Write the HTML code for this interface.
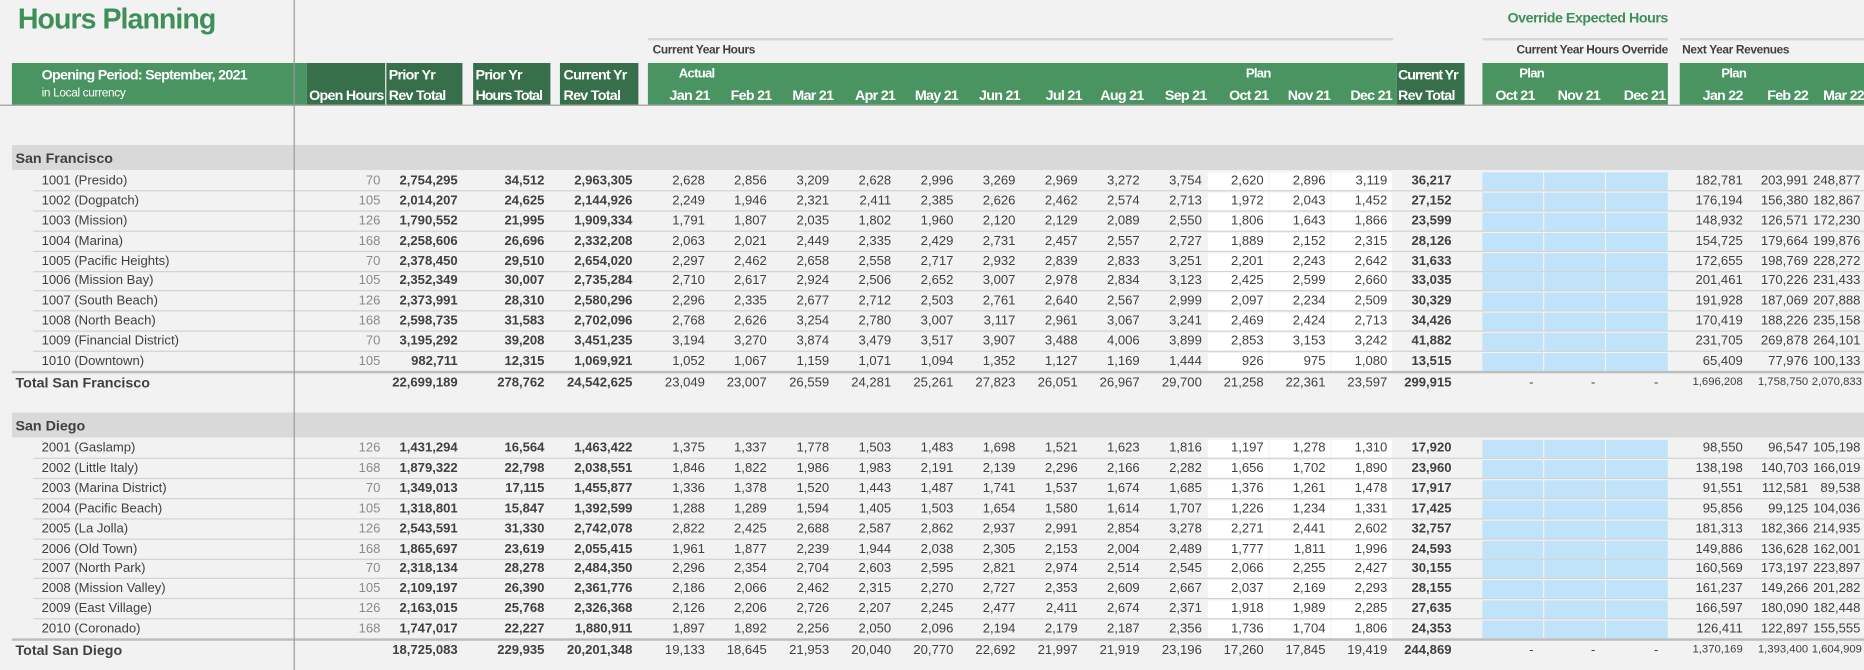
<!DOCTYPE html>
<html><head><meta charset="utf-8">
<style>
html,body{margin:0;padding:0;background:#f2f2f2;overflow:hidden;width:1864px;height:670px}
#w{position:absolute;left:0;top:0;width:1568px;height:564px;transform:scale(1.18878);transform-origin:0 0;font-family:"Liberation Sans",sans-serif;color:#404040}
.a{position:absolute}
.vl{position:absolute;left:247px;top:0;width:1px;height:564px;background:#9a9a9a;z-index:5}
.title{left:15px;top:3px;font-size:24px;font-weight:bold;color:#3f8f5a;letter-spacing:-0.8px}
.g{background:#4a9461}.d{background:#376f4a}
.h{position:absolute;color:#fff;font-weight:bold;font-size:12px;white-space:nowrap;letter-spacing:-0.6px}
.band{position:absolute;left:10px;width:1558px;height:21px;background:#d9d9d9;font-weight:bold;font-size:12px;line-height:22px;padding-left:3px;box-sizing:border-box;color:#404040}
.r{position:absolute;left:0;width:1568px;height:17px;font-size:11px;line-height:16px}
.r::after{content:"";position:absolute;left:28px;right:0;bottom:0;height:1px;background:#d2d2d2}
.r.t::after{display:none}
.r.t{border-top:2px solid #bdbdbd;left:10px;width:1558px}
.r>span{position:absolute;top:0;height:16px;text-align:right;white-space:nowrap;box-sizing:border-box;padding-right:4px}
.r>span:nth-child(1){left:35px;width:200px;text-align:left;padding:0}
.r.t>span:nth-child(1){left:3px;font-weight:bold;font-size:12px}
.r>span:nth-child(2){left:258px;width:66px;color:#8a8a8a}
.r>span:nth-child(3){left:325px;width:64px;font-weight:bold}
.r>span:nth-child(4){left:398px;width:64px;font-weight:bold}
.r>span:nth-child(5){left:471px;width:65px;font-weight:bold}
.r>span:nth-child(6){left:545px;width:52px}
.r>span:nth-child(7){left:597px;width:52px}
.r>span:nth-child(8){left:649.5px;width:52px}
.r>span:nth-child(9){left:701.7px;width:52px}
.r>span:nth-child(10){left:754px;width:52px}
.r>span:nth-child(11){left:806.2px;width:52px}
.r>span:nth-child(12){left:858.5px;width:52px}
.r>span:nth-child(13){left:910.7px;width:52px}
.r>span:nth-child(14){left:963px;width:52px}
.r>span:nth-child(15){left:1016px;width:51px;background:#fff;top:1px;height:15px;line-height:15px}
.r>span:nth-child(16){left:1068px;width:51px;background:#fff;top:1px;height:15px;line-height:15px}
.r>span:nth-child(17){left:1120px;width:51px;background:#fff;top:1px;height:15px;line-height:15px}
.r.t>span:nth-child(15),.r.t>span:nth-child(16),.r.t>span:nth-child(17){background:none}
.r>span:nth-child(18){left:1175px;width:50px;font-weight:bold}
.r>span:nth-child(19){left:1247px;width:51px;background:#c0e3fa;top:1px;height:15px}
.r>span:nth-child(20){left:1299px;width:51px;background:#c0e3fa;top:1px;height:15px}
.r>span:nth-child(21){left:1351px;width:52px;background:#c0e3fa;top:1px;height:15px}
.r.t>span:nth-child(19),.r.t>span:nth-child(20),.r.t>span:nth-child(21){background:none;padding-right:8px}
.r>span:nth-child(22){left:1413px;width:56px;padding-right:3px}
.r>span:nth-child(23){left:1469px;width:55px;padding-right:3px}
.r>span:nth-child(24){left:1524px;width:44px;padding-right:3px}
.r.t>span:nth-child(n+22){font-size:9.5px}
.r.t>span{top:0 !important;line-height:16px !important;height:16px !important}
.r.t>span:nth-child(n+2){margin-left:-10px}
</style></head><body><div id="w">
<div class="vl"></div>
<div class="a title">Hours Planning</div>

<div class="a" style="left:1247px;top:8px;width:156px;text-align:right;font-size:12px;font-weight:bold;color:#3f8f5a;letter-spacing:-0.4px">Override Expected Hours</div>
<div class="a" style="left:545px;top:32px;width:627px;height:2px;background:#d6d6d6"></div>
<div class="a" style="left:1247px;top:32px;width:156px;height:2px;background:#d6d6d6"></div>
<div class="a" style="left:1413px;top:32px;width:155px;height:2px;background:#d6d6d6"></div>
<div class="a" style="left:549px;top:37px;font-size:10px;font-weight:bold;color:#404040;letter-spacing:-0.3px">Current Year Hours</div>
<div class="a" style="left:1247px;top:37px;width:156px;text-align:right;font-size:10px;font-weight:bold;color:#404040;letter-spacing:-0.3px">Current Year Hours Override</div>
<div class="a" style="left:1415px;top:37px;font-size:10px;font-weight:bold;color:#404040;letter-spacing:-0.3px">Next Year Revenues</div>

<div class="a g" style="left:10px;top:53px;width:248px;height:35px"></div>
<div class="h" style="left:35px;top:56px">Opening Period: September, 2021</div>
<div class="h" style="left:35px;top:73px;font-size:10px;font-weight:normal;letter-spacing:-0.3px">in Local currency</div>
<div class="a d" style="left:258px;top:53px;width:66px;height:35px"></div>
<div class="h" style="left:260px;top:73px">Open Hours</div>
<div class="a d" style="left:325px;top:53px;width:64px;height:35px"></div>
<div class="h" style="left:327px;top:56px">Prior Yr</div><div class="h" style="left:327px;top:73px">Rev Total</div>
<div class="a d" style="left:398px;top:53px;width:65px;height:35px"></div>
<div class="h" style="left:400px;top:56px">Prior Yr</div><div class="h" style="left:400px;top:73px;letter-spacing:-0.9px">Hours Total</div>
<div class="a d" style="left:471px;top:53px;width:66px;height:35px"></div>
<div class="h" style="left:474px;top:56px">Current Yr</div><div class="h" style="left:474px;top:73px">Rev Total</div>
<div class="a g" style="left:545px;top:53px;width:630px;height:35px"></div>
<div class="h" style="left:571px;top:56px;font-size:11px">Actual</div>
<div class="h" style="left:1048px;top:56px;font-size:11px">Plan</div>
<div class="h" style="left:545px;top:73px;width:52px;text-align:right">Jan 21</div>
<div class="h" style="left:597px;top:73px;width:52px;text-align:right">Feb 21</div>
<div class="h" style="left:649px;top:73px;width:52px;text-align:right">Mar 21</div>
<div class="h" style="left:701px;top:73px;width:52px;text-align:right">Apr 21</div>
<div class="h" style="left:754px;top:73px;width:52px;text-align:right">May 21</div>
<div class="h" style="left:806px;top:73px;width:52px;text-align:right">Jun 21</div>
<div class="h" style="left:858px;top:73px;width:52px;text-align:right">Jul 21</div>
<div class="h" style="left:910px;top:73px;width:52px;text-align:right">Aug 21</div>
<div class="h" style="left:963px;top:73px;width:52px;text-align:right">Sep 21</div>
<div class="h" style="left:1015px;top:73px;width:52px;text-align:right">Oct 21</div>
<div class="h" style="left:1067px;top:73px;width:52px;text-align:right">Nov 21</div>
<div class="h" style="left:1119px;top:73px;width:52px;text-align:right">Dec 21</div>
<div class="a d" style="left:1175px;top:53px;width:57px;height:35px"></div>
<div class="h" style="left:1176px;top:56px;letter-spacing:-0.9px">Current Yr</div><div class="h" style="left:1176px;top:73px">Rev Total</div>
<div class="a g" style="left:1247px;top:53px;width:156px;height:35px"></div>
<div class="h" style="left:1278px;top:56px;font-size:11px">Plan</div>
<div class="h" style="left:1247px;top:73px;width:44px;text-align:right">Oct 21</div>
<div class="h" style="left:1299px;top:73px;width:47px;text-align:right">Nov 21</div>
<div class="h" style="left:1351px;top:73px;width:50px;text-align:right">Dec 21</div>
<div class="a g" style="left:1413px;top:53px;width:155px;height:35px"></div>
<div class="h" style="left:1448px;top:56px;font-size:11px">Plan</div>
<div class="h" style="left:1413px;top:73px;width:53px;text-align:right">Jan 22</div>
<div class="h" style="left:1466px;top:73px;width:55px;text-align:right">Feb 22</div>
<div class="h" style="left:1521px;top:73px;width:47px;text-align:right">Mar 22</div>
<div class="a" style="left:0;top:88px;width:1568px;height:1px;background:#9a9a9a"></div>

<div class="band" style="top:122px">San Francisco</div>
<div class="r" style="top:144px"><span>1001 (Presido)</span><span>70</span><span>2,754,295</span><span>34,512</span><span>2,963,305</span><span>2,628</span><span>2,856</span><span>3,209</span><span>2,628</span><span>2,996</span><span>3,269</span><span>2,969</span><span>3,272</span><span>3,754</span><span>2,620</span><span>2,896</span><span>3,119</span><span>36,217</span><span></span><span></span><span></span><span>182,781</span><span>203,991</span><span>248,877</span></div>
<div class="r" style="top:161px"><span>1002 (Dogpatch)</span><span>105</span><span>2,014,207</span><span>24,625</span><span>2,144,926</span><span>2,249</span><span>1,946</span><span>2,321</span><span>2,411</span><span>2,385</span><span>2,626</span><span>2,462</span><span>2,574</span><span>2,713</span><span>1,972</span><span>2,043</span><span>1,452</span><span>27,152</span><span></span><span></span><span></span><span>176,194</span><span>156,380</span><span>182,867</span></div>
<div class="r" style="top:178px"><span>1003 (Mission)</span><span>126</span><span>1,790,552</span><span>21,995</span><span>1,909,334</span><span>1,791</span><span>1,807</span><span>2,035</span><span>1,802</span><span>1,960</span><span>2,120</span><span>2,129</span><span>2,089</span><span>2,550</span><span>1,806</span><span>1,643</span><span>1,866</span><span>23,599</span><span></span><span></span><span></span><span>148,932</span><span>126,571</span><span>172,230</span></div>
<div class="r" style="top:195px"><span>1004 (Marina)</span><span>168</span><span>2,258,606</span><span>26,696</span><span>2,332,208</span><span>2,063</span><span>2,021</span><span>2,449</span><span>2,335</span><span>2,429</span><span>2,731</span><span>2,457</span><span>2,557</span><span>2,727</span><span>1,889</span><span>2,152</span><span>2,315</span><span>28,126</span><span></span><span></span><span></span><span>154,725</span><span>179,664</span><span>199,876</span></div>
<div class="r" style="top:212px"><span>1005 (Pacific Heights)</span><span>70</span><span>2,378,450</span><span>29,510</span><span>2,654,020</span><span>2,297</span><span>2,462</span><span>2,658</span><span>2,558</span><span>2,717</span><span>2,932</span><span>2,839</span><span>2,833</span><span>3,251</span><span>2,201</span><span>2,243</span><span>2,642</span><span>31,633</span><span></span><span></span><span></span><span>172,655</span><span>198,769</span><span>228,272</span></div>
<div class="r" style="top:228px"><span>1006 (Mission Bay)</span><span>105</span><span>2,352,349</span><span>30,007</span><span>2,735,284</span><span>2,710</span><span>2,617</span><span>2,924</span><span>2,506</span><span>2,652</span><span>3,007</span><span>2,978</span><span>2,834</span><span>3,123</span><span>2,425</span><span>2,599</span><span>2,660</span><span>33,035</span><span></span><span></span><span></span><span>201,461</span><span>170,226</span><span>231,433</span></div>
<div class="r" style="top:245px"><span>1007 (South Beach)</span><span>126</span><span>2,373,991</span><span>28,310</span><span>2,580,296</span><span>2,296</span><span>2,335</span><span>2,677</span><span>2,712</span><span>2,503</span><span>2,761</span><span>2,640</span><span>2,567</span><span>2,999</span><span>2,097</span><span>2,234</span><span>2,509</span><span>30,329</span><span></span><span></span><span></span><span>191,928</span><span>187,069</span><span>207,888</span></div>
<div class="r" style="top:262px"><span>1008 (North Beach)</span><span>168</span><span>2,598,735</span><span>31,583</span><span>2,702,096</span><span>2,768</span><span>2,626</span><span>3,254</span><span>2,780</span><span>3,007</span><span>3,117</span><span>2,961</span><span>3,067</span><span>3,241</span><span>2,469</span><span>2,424</span><span>2,713</span><span>34,426</span><span></span><span></span><span></span><span>170,419</span><span>188,226</span><span>235,158</span></div>
<div class="r" style="top:279px"><span>1009 (Financial District)</span><span>70</span><span>3,195,292</span><span>39,208</span><span>3,451,235</span><span>3,194</span><span>3,270</span><span>3,874</span><span>3,479</span><span>3,517</span><span>3,907</span><span>3,488</span><span>4,006</span><span>3,899</span><span>2,853</span><span>3,153</span><span>3,242</span><span>41,882</span><span></span><span></span><span></span><span>231,705</span><span>269,878</span><span>264,101</span></div>
<div class="r" style="top:296px"><span>1010 (Downtown)</span><span>105</span><span>982,711</span><span>12,315</span><span>1,069,921</span><span>1,052</span><span>1,067</span><span>1,159</span><span>1,071</span><span>1,094</span><span>1,352</span><span>1,127</span><span>1,169</span><span>1,444</span><span>926</span><span>975</span><span>1,080</span><span>13,515</span><span></span><span></span><span></span><span>65,409</span><span>77,976</span><span>100,133</span></div>
<div class="r t" style="top:312px"><span>Total San Francisco</span><span></span><span>22,699,189</span><span>278,762</span><span>24,542,625</span><span>23,049</span><span>23,007</span><span>26,559</span><span>24,281</span><span>25,261</span><span>27,823</span><span>26,051</span><span>26,967</span><span>29,700</span><span>21,258</span><span>22,361</span><span>23,597</span><span>299,915</span><span>-</span><span>-</span><span>-</span><span>1,696,208</span><span>1,758,750</span><span>2,070,833</span></div>

<div class="band" style="top:347px">San Diego</div>
<div class="r" style="top:369px"><span>2001 (Gaslamp)</span><span>126</span><span>1,431,294</span><span>16,564</span><span>1,463,422</span><span>1,375</span><span>1,337</span><span>1,778</span><span>1,503</span><span>1,483</span><span>1,698</span><span>1,521</span><span>1,623</span><span>1,816</span><span>1,197</span><span>1,278</span><span>1,310</span><span>17,920</span><span></span><span></span><span></span><span>98,550</span><span>96,547</span><span>105,198</span></div>
<div class="r" style="top:386px"><span>2002 (Little Italy)</span><span>168</span><span>1,879,322</span><span>22,798</span><span>2,038,551</span><span>1,846</span><span>1,822</span><span>1,986</span><span>1,983</span><span>2,191</span><span>2,139</span><span>2,296</span><span>2,166</span><span>2,282</span><span>1,656</span><span>1,702</span><span>1,890</span><span>23,960</span><span></span><span></span><span></span><span>138,198</span><span>140,703</span><span>166,019</span></div>
<div class="r" style="top:403px"><span>2003 (Marina District)</span><span>70</span><span>1,349,013</span><span>17,115</span><span>1,455,877</span><span>1,336</span><span>1,378</span><span>1,520</span><span>1,443</span><span>1,487</span><span>1,741</span><span>1,537</span><span>1,674</span><span>1,685</span><span>1,376</span><span>1,261</span><span>1,478</span><span>17,917</span><span></span><span></span><span></span><span>91,551</span><span>112,581</span><span>89,538</span></div>
<div class="r" style="top:420px"><span>2004 (Pacific Beach)</span><span>105</span><span>1,318,801</span><span>15,847</span><span>1,392,599</span><span>1,288</span><span>1,289</span><span>1,594</span><span>1,405</span><span>1,503</span><span>1,654</span><span>1,580</span><span>1,614</span><span>1,707</span><span>1,226</span><span>1,234</span><span>1,331</span><span>17,425</span><span></span><span></span><span></span><span>95,856</span><span>99,125</span><span>104,036</span></div>
<div class="r" style="top:437px"><span>2005 (La Jolla)</span><span>126</span><span>2,543,591</span><span>31,330</span><span>2,742,078</span><span>2,822</span><span>2,425</span><span>2,688</span><span>2,587</span><span>2,862</span><span>2,937</span><span>2,991</span><span>2,854</span><span>3,278</span><span>2,271</span><span>2,441</span><span>2,602</span><span>32,757</span><span></span><span></span><span></span><span>181,313</span><span>182,366</span><span>214,935</span></div>
<div class="r" style="top:454px"><span>2006 (Old Town)</span><span>168</span><span>1,865,697</span><span>23,619</span><span>2,055,415</span><span>1,961</span><span>1,877</span><span>2,239</span><span>1,944</span><span>2,038</span><span>2,305</span><span>2,153</span><span>2,004</span><span>2,489</span><span>1,777</span><span>1,811</span><span>1,996</span><span>24,593</span><span></span><span></span><span></span><span>149,886</span><span>136,628</span><span>162,001</span></div>
<div class="r" style="top:470px"><span>2007 (North Park)</span><span>70</span><span>2,318,134</span><span>28,278</span><span>2,484,350</span><span>2,296</span><span>2,354</span><span>2,704</span><span>2,603</span><span>2,595</span><span>2,821</span><span>2,974</span><span>2,514</span><span>2,545</span><span>2,066</span><span>2,255</span><span>2,427</span><span>30,155</span><span></span><span></span><span></span><span>160,569</span><span>173,197</span><span>223,897</span></div>
<div class="r" style="top:487px"><span>2008 (Mission Valley)</span><span>105</span><span>2,109,197</span><span>26,390</span><span>2,361,776</span><span>2,186</span><span>2,066</span><span>2,462</span><span>2,315</span><span>2,270</span><span>2,727</span><span>2,353</span><span>2,609</span><span>2,667</span><span>2,037</span><span>2,169</span><span>2,293</span><span>28,155</span><span></span><span></span><span></span><span>161,237</span><span>149,266</span><span>201,282</span></div>
<div class="r" style="top:504px"><span>2009 (East Village)</span><span>126</span><span>2,163,015</span><span>25,768</span><span>2,326,368</span><span>2,126</span><span>2,206</span><span>2,726</span><span>2,207</span><span>2,245</span><span>2,477</span><span>2,411</span><span>2,674</span><span>2,371</span><span>1,918</span><span>1,989</span><span>2,285</span><span>27,635</span><span></span><span></span><span></span><span>166,597</span><span>180,090</span><span>182,448</span></div>
<div class="r" style="top:521px"><span>2010 (Coronado)</span><span>168</span><span>1,747,017</span><span>22,227</span><span>1,880,911</span><span>1,897</span><span>1,892</span><span>2,256</span><span>2,050</span><span>2,096</span><span>2,194</span><span>2,179</span><span>2,187</span><span>2,356</span><span>1,736</span><span>1,704</span><span>1,806</span><span>24,353</span><span></span><span></span><span></span><span>126,411</span><span>122,897</span><span>155,555</span></div>
<div class="r t" style="top:537px"><span>Total San Diego</span><span></span><span>18,725,083</span><span>229,935</span><span>20,201,348</span><span>19,133</span><span>18,645</span><span>21,953</span><span>20,040</span><span>20,770</span><span>22,692</span><span>21,997</span><span>21,919</span><span>23,196</span><span>17,260</span><span>17,845</span><span>19,419</span><span>244,869</span><span>-</span><span>-</span><span>-</span><span>1,370,169</span><span>1,393,400</span><span>1,604,909</span></div>
</div></body></html>
